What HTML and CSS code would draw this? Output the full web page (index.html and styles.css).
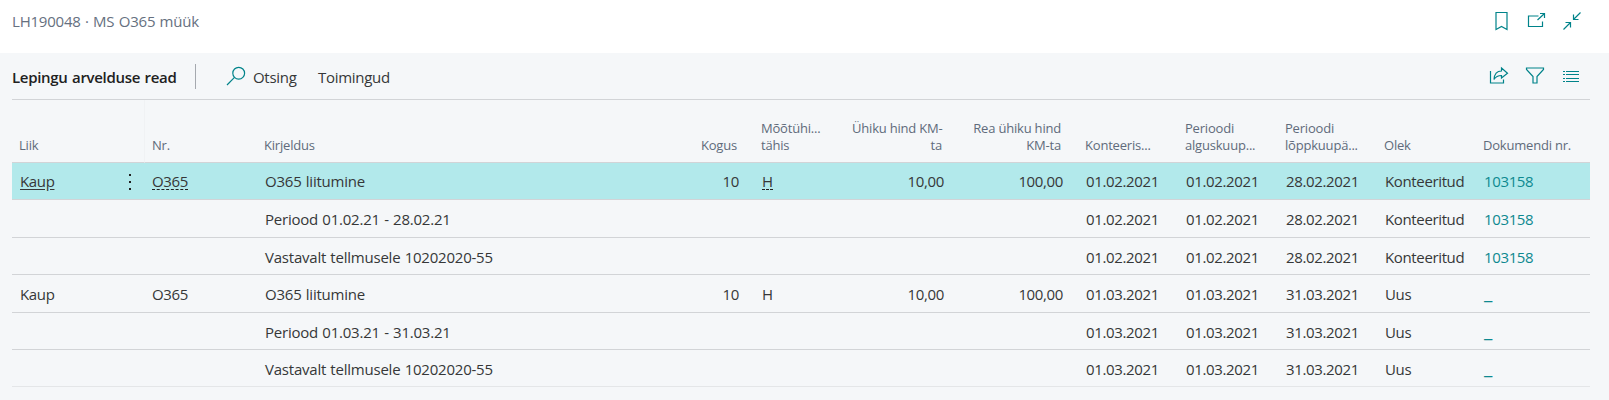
FILE: index.html
```html
<!DOCTYPE html>
<html lang="et">
<head>
<meta charset="utf-8">
<title>LH190048 · MS O365 müük</title>
<link rel="stylesheet" href="styles.css">
</head>
<body>
<header class="topbar">
  <div class="doc-title">LH190048 · MS O365 müük</div>
  <div class="actions">
    <svg class="icon" viewBox="0 0 20 20"><path d="M6 1.500h11v17l-5.500-3-5.500 3z"/></svg>
    <svg class="icon" viewBox="0 0 20 20"><path d="M12.500 5H2.500v10.500h14v-5M11.500 9l7-6.500M14 2.500h4.500v4.500"/></svg>
    <svg class="icon" viewBox="0 0 20 20"><path d="M18.500 1.500l-7 7M11.500 3.500v5h5M1.500 18.500l7-7M3.500 11.500h5v5"/></svg>
  </div>
</header>
<main class="panel">
  <div class="toolbar">
    <h1 class="section-title">Lepingu arvelduse read</h1>
    <div class="divider"></div>
    <svg class="icon search" viewBox="0 0 20 20"><circle cx="12.700" cy="7.200" r="5.900"/><path d="M8.500 11.400L1 19"/></svg>
    <span class="cmd otsing">Otsing</span>
    <span class="cmd">Toimingud</span>
    <div class="actions">
      <svg class="icon" viewBox="0 0 20 20"><path d="M1.500 5v12h13v-3.500M12.500 2l6 5.200-6 4.800V9.500C9 9.500 6.500 11 5 13.500 5.300 9 7.500 5 12.500 5z"/></svg>
      <svg class="icon" viewBox="0 0 20 20"><path d="M1.500 2h17v1.500l-6.500 7V17H8v-6.500l-6.500-7z"/></svg>
      <svg class="icon" viewBox="0 0 20 20"><path d="M5 5.500h13M5 8.500h13M5 12.500h13M5 15.500h13M2 5.500h2M2 8.500h2M2 12.500h2M2 15.500h2"/></svg>
    </div>
  </div>
  <div class="table">
    <div class="row head">
      <div>Liik</div><div></div><div>Nr.</div><div>Kirjeldus</div><div class="num">Kogus</div><div class="wide">Mõõtühi...<br>tähis</div><div class="num">Ühiku hind KM-<br>ta</div><div class="num">Rea ühiku hind<br>KM-ta</div><div class="wide">Konteeris...</div><div>Perioodi<br>alguskuup...</div><div>Perioodi<br>lõppkuupä...</div><div>Olek</div><div>Dokumendi nr.</div>
    </div>
    <div class="row selected">
      <div><span class="linked">Kaup</span></div><div class="menu"><svg width="4" height="18" viewBox="0 0 4 18"><path d="M1 1h2v2H1zM1 8h2v2H1zM1 15h2v2H1z"/></svg></div><div><span class="lookup">O365</span></div><div class="desc">O365 liitumine</div><div class="num">10</div><div class="wide"><span class="lookup">H</span></div><div class="num">10,00</div><div class="num">100,00</div><div class="wide">01.02.2021</div><div>01.02.2021</div><div>28.02.2021</div><div>Konteeritud</div><div class="link">103158</div>
    </div>
    <div class="row tall">
      <div></div><div></div><div></div><div class="desc">Periood 01.02.21 - 28.02.21</div><div></div><div></div><div></div><div></div><div class="wide">01.02.2021</div><div>01.02.2021</div><div>28.02.2021</div><div>Konteeritud</div><div class="link">103158</div>
    </div>
    <div class="row">
      <div></div><div></div><div></div><div class="desc">Vastavalt tellmusele 10202020-55</div><div></div><div></div><div></div><div></div><div class="wide">01.02.2021</div><div>01.02.2021</div><div>28.02.2021</div><div>Konteeritud</div><div class="link">103158</div>
    </div>
    <div class="row tall">
      <div>Kaup</div><div></div><div>O365</div><div class="desc">O365 liitumine</div><div class="num">10</div><div class="wide">H</div><div class="num">10,00</div><div class="num">100,00</div><div class="wide">01.03.2021</div><div>01.03.2021</div><div>31.03.2021</div><div>Uus</div><div class="link dash">_</div>
    </div>
    <div class="row">
      <div></div><div></div><div></div><div class="desc">Periood 01.03.21 - 31.03.21</div><div></div><div></div><div></div><div></div><div class="wide">01.03.2021</div><div>01.03.2021</div><div>31.03.2021</div><div>Uus</div><div class="link dash">_</div>
    </div>
    <div class="row last">
      <div></div><div></div><div></div><div class="desc">Vastavalt tellmusele 10202020-55</div><div></div><div></div><div></div><div></div><div class="wide">01.03.2021</div><div>01.03.2021</div><div>31.03.2021</div><div>Uus</div><div class="link dash">_</div>
    </div>
  </div>
</main>
</body>
</html>
```
FILE: styles.css
```css
* { box-sizing: border-box; }
body {
  margin: 0;
  height: 400px;
  overflow: hidden;
  display: flex;
  flex-direction: column;
  background: #fff;
  color: #363738;
  font: 400 15px/20px "Open Sans", "Noto Sans", sans-serif;
  letter-spacing: -0.36px;
}
.topbar {
  height: 53px;
  flex: none;
  display: flex;
  justify-content: space-between;
  padding: 11px 27px 0 12px;
  color: #667080;
}
.doc-title { letter-spacing: -0.2px; word-spacing: 0.6px; }
.actions { display: flex; gap: 16px; }
.icon {
  width: 20px;
  height: 20px;
  fill: none;
  stroke: #00838a;
  stroke-width: 1.2;
}
.panel {
  flex: 1;
  background: #f5f7f9;
  padding: 0 19px 0 12px;
}
.toolbar {
  height: 47px;
  display: flex;
  align-items: center;
  border-bottom: 1px solid #d2d4d7;
}
.toolbar .actions { margin-left: auto; padding-right: 9px; }
.section-title {
  margin: 0;
  padding-top: 2px;
  width: 183px;
  color: #212121;
  font-size: 15px;
  font-weight: 600;
  letter-spacing: -0.3px;
  word-spacing: 0.8px;
  white-space: nowrap;
}
.divider { width: 1px; height: 25px; background: #a5a9af; }
.search { margin: 0 7px 0 30px; }
.cmd { padding-top: 2px; letter-spacing: -0.3px; }
.otsing { width: 65px; }
.row {
  display: grid;
  grid-template-columns: 101px 32px 113px 397px 88px 102px 103px 119px 111px 100px 99px 99px 114px;
  height: 37px;
}
.row > div {
  padding: 9px 4px 0 8px;
  border-bottom: 1px solid #d2d4d7;
  white-space: nowrap;
}
.row > .desc { padding-left: 7px; letter-spacing: -0.22px; word-spacing: 0.6px; }
.row > .wide { padding-left: 19px; }
.row > .num { text-align: right; }
.row > div:nth-child(3) { padding-left: 7px; }
.tall { height: 38px; }
.head { height: 63px; color: #606b7b; font-size: 13px; line-height: 17px; letter-spacing: -0.2px; }
.head > div { display: flex; flex-direction: column; justify-content: flex-end; padding: 0 6px 8px 7px; }
.head > div:nth-child(4) { padding-left: 6px; }
.head > .wide { padding-left: 18px; }
.head > div:nth-child(2) { border-right: 1px solid #f0f2f4; }
.selected { background: #b2e9eb; }
.selected > div { padding-top: 8px; }
.last > div { border-color: #e4e6e8; }
.linked { text-decoration: underline; text-underline-offset: 2px; }
.lookup { display: inline-block; height: 19px; border-bottom: 1px dashed #212121; }
.row > .menu { padding: 10px 0 0 15px; }
.menu svg { display: block; fill: #212121; }
.row > .link { color: #0e8990; }
.row > .dash { font-size: 19px; padding-top: 7px; }
```
